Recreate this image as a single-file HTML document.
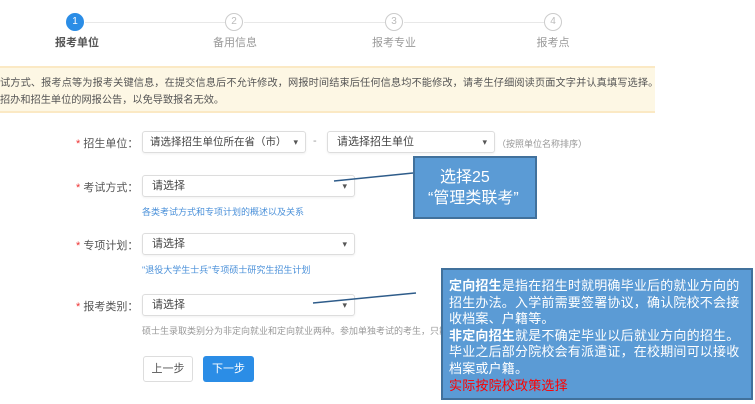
<!DOCTYPE html>
<html><head><meta charset="utf-8"><style>
*{margin:0;padding:0;box-sizing:border-box}
body{width:755px;height:404px;background:#fff;position:relative;overflow:hidden;font-family:"Liberation Sans","Noto Sans CJK SC",sans-serif;color:#555}
.a{position:absolute;white-space:nowrap}
.c{position:absolute;width:18px;height:18px;border-radius:50%;border:1px solid #ccc;color:#bbb;font-size:10px;text-align:center;line-height:16px;background:#fff}
.ln{position:absolute;height:1px;background:#e8e8e8;top:22px}
.st{position:absolute;top:34px;font-size:11px;color:#999;width:80px;text-align:center}
.sel{position:absolute;height:22px;border:1px solid #ddd;border-radius:3px;font-size:11px;color:#444;padding-left:9px;line-height:20px;box-shadow:0 1px 2px rgba(0,0,0,.06)}
.sel:after{content:"▾";position:absolute;right:7px;top:0;font-size:9px;color:#555}
.lb{position:absolute;left:76px;font-size:11px;color:#555}
.lb b{color:#e33;font-weight:normal}
.hint{position:absolute;font-size:9px;color:#4a90d9}
</style></head><body>
<div class="ln" style="left:85px;width:140px"></div>
<div class="ln" style="left:244px;width:141px"></div>
<div class="ln" style="left:404px;width:140px"></div>
<div class="c" style="left:66px;top:13px;background:#2b8de6;border-color:#2b8de6;color:#fff">1</div>
<div class="c" style="left:225px;top:13px">2</div>
<div class="c" style="left:385px;top:13px">3</div>
<div class="c" style="left:544px;top:13px">4</div>
<div class="st" style="left:37px;color:#555;font-weight:bold">报考单位</div>
<div class="st" style="left:195px">备用信息</div>
<div class="st" style="left:354px">报考专业</div>
<div class="st" style="left:513px">报考点</div>

<div class="a" style="left:0;top:66px;width:655px;height:47px;background:#fdf7e4;border-top:2px solid #fbe9c4;border-bottom:2px solid #fbe9c4"></div>
<div class="a" style="left:0;top:74px;font-size:10.2px;color:#555;letter-spacing:0.1px">试方式、报考点等为报考关键信息，在提交信息后不允许修改，网报时间结束后任何信息均不能修改，请考生仔细阅读页面文字并认真填写选择。</div>
<div class="a" style="left:0;top:91px;font-size:10.2px;color:#555">招办和招生单位的网报公告，以免导致报名无效。</div>

<div class="lb" style="top:135px"><b>*</b> 招生单位：</div>
<div class="sel" style="left:142px;top:131px;width:164px;padding-left:7px;font-size:10.5px">请选择招生单位所在省（市）</div>
<div class="a" style="left:313px;top:135px;font-size:11px;color:#999">-</div>
<div class="sel" style="left:327px;top:131px;width:168px">请选择招生单位</div>
<div class="a" style="left:497px;top:137px;font-size:9px;color:#999">（按照单位名称排序）</div>

<div class="lb" style="top:179px"><b>*</b> 考试方式：</div>
<div class="sel" style="left:142px;top:175px;width:213px">请选择</div>
<div class="hint" style="left:142px;top:205px">各类考试方式和专项计划的概述以及关系</div>

<div class="lb" style="top:237px"><b>*</b> 专项计划：</div>
<div class="sel" style="left:142px;top:233px;width:213px">请选择</div>
<div class="hint" style="left:142px;top:263px">"退役大学生士兵"专项硕士研究生招生计划</div>

<div class="lb" style="top:298px"><b>*</b> 报考类别：</div>
<div class="sel" style="left:142px;top:294px;width:213px">请选择</div>
<div class="a" style="left:142px;top:324px;font-size:9px;color:#999">硕士生录取类别分为非定向就业和定向就业两种。参加单独考试的考生，只能被</div>

<div class="a" style="left:143px;top:356px;width:50px;height:26px;border:1px solid #ddd;border-radius:3px;font-size:11px;text-align:center;line-height:24px;color:#555">上一步</div>
<div class="a" style="left:203px;top:356px;width:51px;height:26px;background:#2b8de6;border-radius:3px;font-size:11px;text-align:center;line-height:26px;color:#fff">下一步</div>

<svg class="a" style="left:0;top:0" width="755" height="404"><line x1="334" y1="181" x2="413" y2="173" stroke="#2e5c8a" stroke-width="1.5"/><line x1="313" y1="303" x2="416" y2="293" stroke="#2e5c8a" stroke-width="1.5"/></svg>

<div class="a" style="left:413px;top:156px;width:124px;height:63px;background:#5b9bd5;border:2px solid #41719c;color:#fff;font-size:16px;line-height:21px;padding-top:9px;padding-left:25px">选择25<br><span style="margin-left:-12px">“管理类联考”</span></div>

<div class="a" style="left:441px;top:268px;width:312px;height:132px;background:#5b9bd5;border:2px solid #41719c;"></div>
<div class="a" style="left:449px;top:278px;width:300px;color:#fff;font-size:13px;line-height:16.6px;white-space:normal;letter-spacing:0.2px"><b>定向招生</b>是指在招生时就明确毕业后的就业方向的招生办法。入学前需要签署协议，确认院校不会接收档案、户籍等。<br><b>非定向招生</b>就是不确定毕业以后就业方向的招生。毕业之后部分院校会有派遣证，在校期间可以接收档案或户籍。<br><span style="color:#f00">实际按院校政策选择</span></div>
</body></html>
